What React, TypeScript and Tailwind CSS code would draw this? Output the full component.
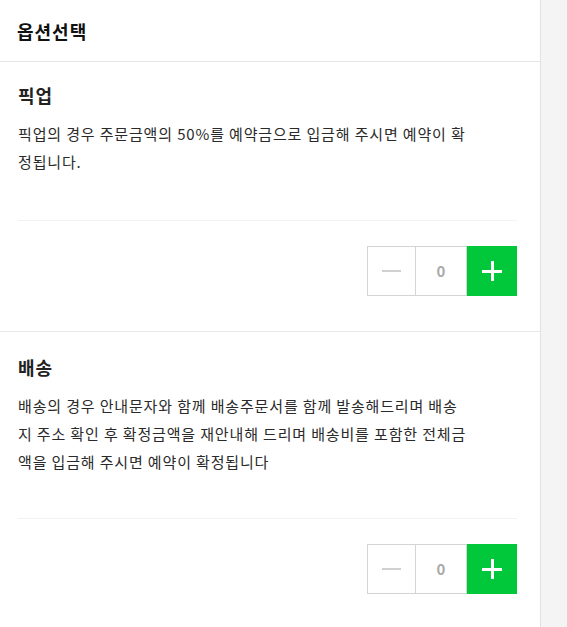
import React from "react";

const font = { fontFamily: '"Noto Sans CJK KR", "Liberation Sans", sans-serif' };

function Stepper() {
  return (
    <div className="flex justify-end">
      <div className="flex h-[50px]">
        <button className="flex h-[50px] w-[49px] items-center justify-center border border-[#d4d4d4] bg-white">
          <span className="block h-[2px] w-[19px] bg-[#d0d0d0]" />
        </button>
        <div className="flex h-[50px] w-[51px] items-center justify-center border-y border-r border-[#d4d4d4] bg-white text-[15px] font-bold text-[#aaaaaa]">
          0
        </div>
        <button className="relative flex h-[50px] w-[50px] items-center justify-center bg-[#00c83a]">
          <span className="absolute h-[3px] w-[20px] bg-white" />
          <span className="absolute h-[20px] w-[3px] bg-white" />
        </button>
      </div>
    </div>
  );
}

export default function App() {
  return (
    <div className="flex min-h-screen w-full bg-[#f4f4f4]" style={font}>
      <div className="w-[541px] shrink-0 border-r border-[#e3e3e3] bg-white">
        <div className="flex h-[62px] items-center border-b border-[#e5e5e5] pl-[17px]">
          <h1 className="text-[18px] font-bold leading-[26px] tracking-[1px] text-[#111]">옵션선택</h1>
        </div>

        <section className="border-b border-[#e8e8e8] pb-[35px] pl-[18px] pr-[23px] pt-[20px]">
          <h2 className="text-[18px] font-bold leading-[26px] tracking-[1px] text-[#222]">픽업</h2>
          <p className="mt-[12px] whitespace-nowrap text-[15px] leading-[28px] tracking-[0.85px] text-[#2a2a2a]">
            픽업의 경우 주문금액의 50%를 예약금으로 입금해 주시면 예약이 확
            <br />
            정됩니다.
          </p>
          <div className="mt-[44px] h-px bg-[#f2f2f2]" />
          <div className="mt-[25px]">
            <Stepper />
          </div>
        </section>

        <section className="pb-[33px] pl-[18px] pr-[23px] pt-[22px]">
          <h2 className="text-[18px] font-bold leading-[26px] tracking-[1px] text-[#222]">배송</h2>
          <p className="mt-[12px] whitespace-nowrap text-[15px] leading-[28px] tracking-[0.85px] text-[#2a2a2a]">
            배송의 경우 안내문자와 함께 배송주문서를 함께 발송해드리며 배송
            <br />
            지 주소 확인 후 확정금액을 재안내해 드리며 배송비를 포함한 전체금
            <br />
            액을 입금해 주시면 예약이 확정됩니다
          </p>
          <div className="mt-[42px] h-px bg-[#f2f2f2]" />
          <div className="mt-[25px]">
            <Stepper />
          </div>
        </section>
      </div>
      <div className="flex-1" />
    </div>
  );
}
